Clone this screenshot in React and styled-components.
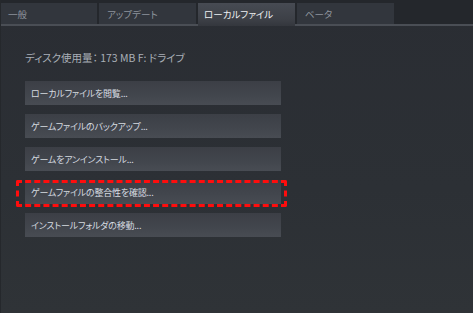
import React from 'react'
import styled, { createGlobalStyle } from 'styled-components'

const GlobalStyle = createGlobalStyle`
  html, body {
    margin: 0;
    padding: 0;
    background: #2b2e34;
  }
`

const Window = styled.div`
  width: 473px;
  height: 313px;
  overflow: hidden;
  background: linear-gradient(to bottom, #2a2d33 0%, #2c3035 60%, #2f3337 100%);
  border-left: 1px solid #25282c;
  box-sizing: border-box;
  font-family: 'Noto Sans CJK JP', 'Noto Sans', sans-serif;
  font-size: 10px;
  font-feature-settings: 'palt';
`

const TabBar = styled.div`
  display: flex;
  align-items: flex-end;
  gap: 2px;
  height: 24px;
  background: #24272c;
  border-bottom: 2px solid #4a4e55;
  margin-left: -1px;
`

const Tab = styled.div`
  width: 97px;
  height: ${({ $active }) => ($active ? '23px' : '21px')};
  margin-bottom: ${({ $active }) => ($active ? '-2px' : '0')};
  box-sizing: border-box;
  padding-left: ${({ $active }) => ($active ? '6px' : '8px')};
  padding-bottom: ${({ $active }) => ($active ? '2px' : '0')};
  display: flex;
  align-items: center;
  font-size: 9.5px;
  color: ${({ $active }) => ($active ? '#eef0f2' : '#8d939c')};
  background: ${({ $active }) =>
    $active
      ? 'linear-gradient(to bottom, #474b53 0%, #3d4047 70%, #34373d 100%)'
      : '#32363d'};
`

const Content = styled.div`
  padding: 25px 0 0 24px;
`

const DiskInfo = styled.div`
  color: #a9afb7;
  font-size: 10.5px;
  line-height: 14px;
  height: 14px;
  margin-bottom: 16px;
`

const ButtonList = styled.div`
  display: flex;
  flex-direction: column;
  gap: 9px;
  width: 256px;
`

const ActionButton = styled.div`
  position: relative;
  height: 24px;
  box-sizing: border-box;
  padding-left: 6px;
  display: flex;
  align-items: center;
  font-size: 9px;
  letter-spacing: -0.2px;
  color: #d6dbe0;
  background: linear-gradient(to bottom, #3c3f46 0%, #42464d 60%, #484c53 100%);
`

const Highlight = styled.div`
  position: absolute;
  left: -9px;
  right: -6px;
  top: 0;
  bottom: -3px;
  border: 3px dashed #ff0d0d;
  border-radius: 2px;
  pointer-events: none;
`

const tabs = ['一般', 'アップデート', 'ローカルファイル', 'ベータ']

const actions = [
  'ローカルファイルを閲覧...',
  'ゲームファイルのバックアップ...',
  'ゲームをアンインストール...',
  'ゲームファイルの整合性を確認...',
  'インストールフォルダの移動...',
]

const App = () => (
  <>
    <GlobalStyle />
    <Window>
      <TabBar>
        {tabs.map((t, i) => (
          <Tab key={t} $active={i === 2}>
            {t}
          </Tab>
        ))}
      </TabBar>
      <Content>
        <DiskInfo>ディスク使用量： 173 MB F: ドライブ</DiskInfo>
        <ButtonList>
          {actions.map((a, i) => (
            <ActionButton key={a}>
              {a}
              {i === 3 && <Highlight />}
            </ActionButton>
          ))}
        </ButtonList>
      </Content>
    </Window>
  </>
)

export default App
